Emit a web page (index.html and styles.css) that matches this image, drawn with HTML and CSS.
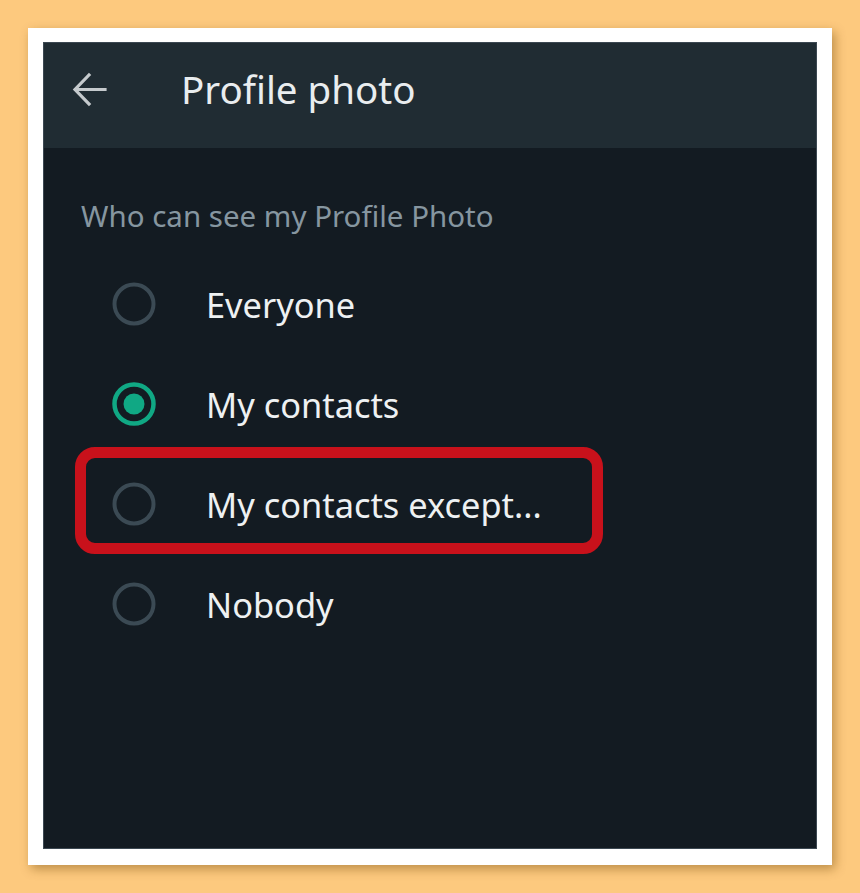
FILE: index.html
```html
<!DOCTYPE html>
<html>
<head>
<meta charset="utf-8">
<link rel="stylesheet" href="styles.css">
</head>
<body>
<div class="frame">
  <div class="screen">
    <header class="appbar">
      <svg class="back" width="36" height="36" viewBox="0 0 36 36">
        <path d="M33 17.5H3.5M17 3L3 17.5L17 32" fill="none" stroke="#c5cacd" stroke-width="3.2" stroke-linecap="square" stroke-linejoin="miter"/>
      </svg>
      <h1 class="title">Profile photo</h1>
    </header>
    <main class="content">
      <p class="label">Who can see my Profile Photo</p>
      <div class="row">
        <svg class="radio" width="44" height="44" viewBox="0 0 44 44"><circle cx="22" cy="22" r="19.5" fill="none" stroke="#3b4a54" stroke-width="4"/></svg>
        <span class="opt">Everyone</span>
      </div>
      <div class="row">
        <svg class="radio" width="44" height="44" viewBox="0 0 44 44"><circle cx="22" cy="22" r="19.5" fill="none" stroke="#10a884" stroke-width="4.5"/><circle cx="22" cy="22" r="10.5" fill="#10a884"/></svg>
        <span class="opt">My contacts</span>
      </div>
      <div class="row highlighted">
        <svg class="radio" width="44" height="44" viewBox="0 0 44 44"><circle cx="22" cy="22" r="19.5" fill="none" stroke="#3b4a54" stroke-width="4"/></svg>
        <span class="opt">My contacts except...</span>
        <div class="mark"></div>
      </div>
      <div class="row">
        <svg class="radio" width="44" height="44" viewBox="0 0 44 44"><circle cx="22" cy="22" r="19.5" fill="none" stroke="#3b4a54" stroke-width="4"/></svg>
        <span class="opt">Nobody</span>
      </div>
    </main>
  </div>
</div>
</body>
</html>
```

FILE: styles.css
```css
html, body {
  margin: 0;
  padding: 0;
}
body {
  background: #fdc97e;
  width: 860px;
  height: 893px;
  overflow: hidden;
  font-family: "Noto Sans", "Open Sans", sans-serif;
}
.frame {
  margin: 28px 0 0 28px;
  width: 804px;
  height: 837px;
  box-sizing: border-box;
  padding: 15px 16px 17px 16px;
  background: #ffffff;
  box-shadow: 3px 4px 10px rgba(110, 70, 10, 0.45);
}
.screen {
  width: 772px;
  height: 805px;
  background: #131b22;
  box-shadow: 0 0 0 1px #3c4852;
  display: flex;
  flex-direction: column;
}
.appbar {
  height: 105px;
  background: #202c33;
  display: flex;
  align-items: flex-start;
  flex-shrink: 0;
}
.back {
  margin: 29px 0 0 28px;
  flex-shrink: 0;
}
.title {
  margin: 20px 0 0 73px;
  font-weight: 400;
  font-size: 38.5px;
  line-height: 52px;
  color: #e9edef;
}
.content {
  padding-top: 48px;
}
.label {
  margin: 0 0 18px 37px;
  font-size: 29.5px;
  line-height: 40px;
  color: #8696a0;
}
.row {
  position: relative;
  height: 100px;
  display: flex;
  align-items: center;
}
.radio {
  margin-left: 68px;
  flex-shrink: 0;
}
.opt {
  margin-left: 50px;
  font-size: 34.4px;
  color: #eef1f2;
}
.mark {
  position: absolute;
  left: 31px;
  width: 528px;
  top: -7px;
  bottom: 0;
  box-sizing: border-box;
  border: 11px solid #c8111b;
  border-radius: 20px;
}
```
